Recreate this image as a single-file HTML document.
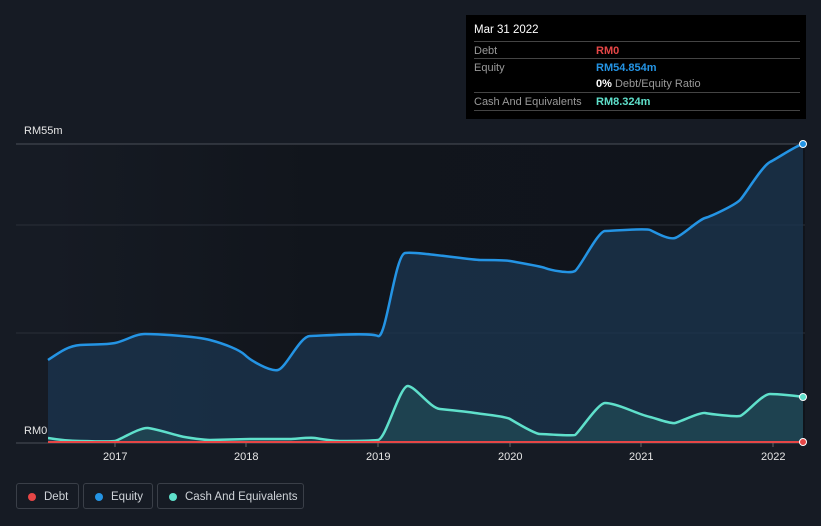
<!DOCTYPE html>
<html><head><style>
body{margin:0;width:821px;height:526px;background:#161b24;font-family:"Liberation Sans",sans-serif;overflow:hidden;position:relative}
.tt{position:absolute;left:466px;top:15px;width:340px;height:104px;background:#000;color:#fff;font-size:11px}
.row{position:absolute;left:8px;right:6px;border-top:1px solid #444;height:17px}
.row span{position:absolute;top:3px}
.leg{position:absolute;top:483px;height:26px;border:1px solid #3a3f48;border-radius:3px;color:#cfd3d8;font-size:11.5px;line-height:26px;box-sizing:border-box}
.leg i{position:absolute;left:11px;top:9px;width:8px;height:8px;border-radius:50%}
.leg b{font-weight:normal;position:absolute;left:27px}
.ax{position:absolute;top:451px;color:#e6e6e6;font-size:11px}
</style></head><body>
<svg width="821" height="526" style="position:absolute;left:0;top:0">
<defs><linearGradient id="bg" x1="0" x2="1" y1="0" y2="0"><stop offset="0" stop-color="#161b24"/><stop offset="0.35" stop-color="#11151c"/><stop offset="1" stop-color="#10141b"/></linearGradient></defs>
<rect x="48" y="144" width="757" height="299" fill="url(#bg)"/>
<line x1="16" y1="144" x2="805" y2="144" stroke="#4a4f58"/>
<line x1="16" y1="225" x2="805" y2="225" stroke="#2a2f38"/>
<line x1="16" y1="333" x2="805" y2="333" stroke="#2a2f38"/>
<line x1="16" y1="443" x2="805" y2="443" stroke="#4a4f58"/>
<path d="M48,360 C60,352 68,346 80,345 S105,345 115,343 S135,334 145,334 S195,336 210,340 S240,350 245,355 S270,372 278,370 S300,336 310,336 S370,332 378,336 S395,255 405,253 S470,260 480,260 S505,260 510,261 S540,266 545,268 S570,274 575,271 S598,231 605,231 S645,228 650,230 S668,240 675,238 S698,220 705,218 S735,205 740,200 S762,166 770,162 S797,145 803,144 L803,443 L48,443 Z" fill="#1b3550" fill-opacity="0.75"/>
<path d="M48,360 C60,352 68,346 80,345 S105,345 115,343 S135,334 145,334 S195,336 210,340 S240,350 245,355 S270,372 278,370 S300,336 310,336 S370,332 378,336 S395,255 405,253 S470,260 480,260 S505,260 510,261 S540,266 545,268 S570,274 575,271 S598,231 605,231 S645,228 650,230 S668,240 675,238 S698,220 705,218 S735,205 740,200 S762,166 770,162 S797,145 803,144" fill="none" stroke="#2494e4" stroke-width="2.5"/>
<path d="M48,438 C60,440 70,441 80,441 S110,442 115,441 S140,427 148,428 S172,434 180,436 S205,440 210,440 S245,439 250,439 S285,439 290,439 S310,437 315,438 S335,441 340,441 S370,441 378,440 S400,385 408,386 S430,408 440,409 S470,412 475,413 S505,416 510,419 S535,434 540,434 S572,436 575,435 S598,403 605,403 S625,408 630,410 S645,416 650,417 S670,424 675,423 S700,412 705,413 S735,417 740,416 S762,394 770,394 S798,396 803,397 L803,443 L48,443 Z" fill="#2a6a6a" fill-opacity="0.35"/>
<path d="M48,438 C60,440 70,441 80,441 S110,442 115,441 S140,427 148,428 S172,434 180,436 S205,440 210,440 S245,439 250,439 S285,439 290,439 S310,437 315,438 S335,441 340,441 S370,441 378,440 S400,385 408,386 S430,408 440,409 S470,412 475,413 S505,416 510,419 S535,434 540,434 S572,436 575,435 S598,403 605,403 S625,408 630,410 S645,416 650,417 S670,424 675,423 S700,412 705,413 S735,417 740,416 S762,394 770,394 S798,396 803,397" fill="none" stroke="#5fe0cb" stroke-width="2.5"/>
<line x1="48" y1="442" x2="803" y2="442" stroke="#e64646" stroke-width="2"/>
<circle cx="803" cy="144" r="3.5" fill="#2494e4" stroke="#fff" stroke-width="1"/>
<circle cx="803" cy="397" r="3.5" fill="#5fe0cb" stroke="#fff" stroke-width="1"/>
<circle cx="803" cy="442" r="3.5" fill="#e64646" stroke="#fff" stroke-width="1"/>
<g stroke="#666"><line x1="115" y1="443" x2="115" y2="447"/><line x1="246" y1="443" x2="246" y2="447"/><line x1="378" y1="443" x2="378" y2="447"/><line x1="510" y1="443" x2="510" y2="447"/><line x1="641" y1="443" x2="641" y2="447"/><line x1="773" y1="443" x2="773" y2="447"/></g>
</svg>
<div style="position:absolute;left:16px;top:424px;width:32px;height:18px;background:#161b24"></div>
<div style="position:absolute;left:24px;top:125px;color:#e6e6e6;font-size:11px">RM55m</div>
<div style="position:absolute;left:24px;top:425px;color:#e6e6e6;font-size:11px">RM0</div>
<div class="ax" style="left:103px">2017</div><div class="ax" style="left:234px">2018</div><div class="ax" style="left:366px">2019</div><div class="ax" style="left:498px">2020</div><div class="ax" style="left:629px">2021</div><div class="ax" style="left:761px">2022</div>
<div class="tt">
<div style="position:absolute;left:8px;top:9px;font-size:11.5px">Mar 31 2022</div>
<div class="row" style="top:26px"><span style="color:#999">Debt</span><span style="left:122px;color:#e64646;font-weight:bold">RM0</span></div>
<div class="row" style="top:43px"><span style="color:#999">Equity</span><span style="left:122px;color:#2494e4;font-weight:bold">RM54.854m</span></div>
<div class="row" style="top:60px;border:0"><span style="left:122px"><b>0%</b> <span style="position:static;color:#999">Debt/Equity Ratio</span></span></div>
<div class="row" style="top:77px"><span style="color:#999">Cash And Equivalents</span><span style="left:122px;color:#5fe0cb;font-weight:bold">RM8.324m</span></div>
<div class="row" style="top:95px;height:0"></div>
</div>
<div class="leg" style="left:16px;width:63px"><i style="background:#e64646"></i><b>Debt</b></div>
<div class="leg" style="left:83px;width:70px"><i style="background:#2494e4"></i><b>Equity</b></div>
<div class="leg" style="left:157px;width:147px"><i style="background:#5fe0cb"></i><b>Cash And Equivalents</b></div>
</body></html>
